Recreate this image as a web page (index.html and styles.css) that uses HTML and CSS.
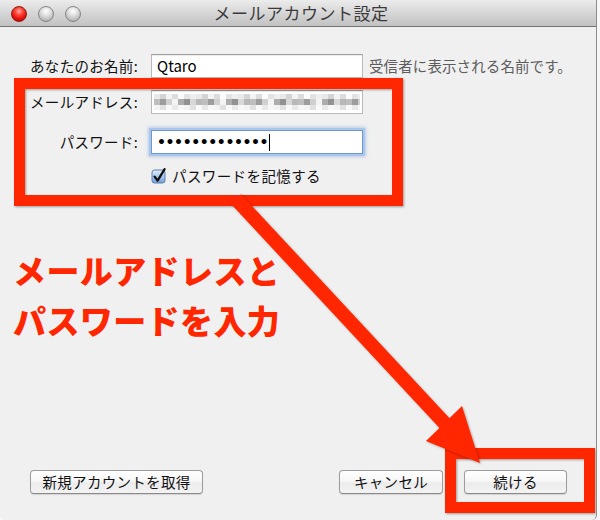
FILE: index.html
```html
<!DOCTYPE html>
<html lang="ja">
<head>
<meta charset="utf-8">
<title>メールアカウント設定</title>
<link rel="stylesheet" href="styles.css">
</head>
<body>
<div class="window">
  <header class="titlebar">
    <div class="lights">
      <span class="light light-red"></span>
      <span class="light light-gray"></span>
      <span class="light light-gray"></span>
    </div>
    <h1 class="title">メールアカウント設定</h1>
    <div class="spacer"></div>
  </header>
  <main class="content">
    <div class="form">
      <div class="row row-name">
        <span class="label">あなたのお名前:</span>
        <div class="field"><span class="value">Qtaro</span></div>
        <span class="hint">受信者に表示される名前です。</span>
      </div>
      <div class="row row-mail">
        <span class="label">メールアドレス:</span>
        <div class="field"><div class="blur"></div></div>
      </div>
      <div class="row row-pass">
        <span class="label">パスワード:</span>
        <div class="field field-focus"><span class="dots">•••••••••••••</span><span class="caret"></span></div>
      </div>
      <div class="row row-check">
        <span class="label"></span>
        <span class="checkbox">
          <svg width="16" height="16" viewBox="0 0 16 16">
            <defs>
              <linearGradient id="cb" x1="0" y1="0" x2="0" y2="1">
                <stop offset="0" stop-color="#e4eefb"/>
                <stop offset="0.5" stop-color="#a9c8ef"/>
                <stop offset="1" stop-color="#6f9fdc"/>
              </linearGradient>
            </defs>
            <rect x="1" y="2" width="13" height="13" rx="2.5" fill="url(#cb)" stroke="#5b7fae" stroke-width="1"/>
            <path d="M3.6 8.6 L6.6 12.6 L13.6 1.2" fill="none" stroke="#111" stroke-width="2.3" stroke-linecap="round" stroke-linejoin="round"/>
          </svg>
        </span>
        <span class="check-label">パスワードを記憶する</span>
      </div>
    </div>
    <p class="callout">メールアドレスと<br>パスワードを入力</p>
    <div class="buttons">
      <button class="btn btn-new">新規アカウントを取得</button>
      <div class="btn-group">
        <button class="btn btn-cancel">キャンセル</button>
        <button class="btn btn-continue">続ける</button>
      </div>
    </div>
  </main>
  <div class="mark mark-fields"></div>
  <div class="mark mark-continue"></div>
  <svg class="arrow" width="598" height="520" viewBox="0 0 598 520">
    <line x1="236" y1="199" x2="450" y2="429" stroke="#ff2600" stroke-width="14"/>
    <polygon points="462,406 426,441 480,463" fill="#ff2600"/>
  </svg>
</div>
</body>
</html>
```

FILE: styles.css
```css
html, body {
  margin: 0;
  padding: 0;
}
body {
  background: #f7f7f7;
  width: 600px;
  height: 520px;
  overflow: hidden;
  font-family: "Noto Sans CJK JP", "Noto Sans", sans-serif;
  color: #1a1a1a;
}
.window {
  position: relative;
  width: 597px;
  height: 520px;
  box-sizing: border-box;
  border-right: 1px solid #8c8c8c;
  border-bottom-left-radius: 5px;
  border-bottom-right-radius: 5px;
  background: #f0f0f0;
  display: flex;
  flex-direction: column;
  overflow: hidden;
}
.titlebar {
  height: 27px;
  box-sizing: border-box;
  border-bottom: 1px solid #737373;
  background: linear-gradient(#ececec, #d6d6d6 50%, #c2c2c2);
  display: grid;
  grid-template-columns: 1fr auto 1fr;
  align-items: center;
}
.lights {
  display: flex;
  gap: 11px;
  padding-left: 11px;
  padding-top: 1px;
}
.light {
  width: 16px;
  height: 16px;
  box-sizing: border-box;
  border-radius: 50%;
}
.light-red {
  background: radial-gradient(circle at 50% 30%, #ffb0a8 0, #ff4a3c 30%, #e0100a 65%, #b00000 100%);
  border: 1px solid #8e1a12;
}
.light-gray {
  background: radial-gradient(circle at 50% 30%, #ffffff 0, #e2e2e2 35%, #b9b9b9 75%, #a3a3a3 100%);
  border: 1px solid #858585;
}
.title {
  margin: 0;
  font-size: 17px;
  font-weight: 400;
  color: #3a3a3a;
  line-height: 26px;
  letter-spacing: 0.5px;
  padding-left: 6px;
}
.content {
  flex: 1;
  display: flex;
  flex-direction: column;
  padding-top: 27px;
  padding-bottom: 26px;
}
.form {
  display: flex;
  flex-direction: column;
}
.row {
  display: flex;
  align-items: center;
  height: 24px;
}
.row-mail { margin-top: 12px; }
.row-pass { margin-top: 16px; }
.row-check { margin-top: 12px; height: 20px; }
.label {
  width: 138px;
  margin-right: 13px;
  text-align: right;
  font-size: 14.5px;
  line-height: 20px;
  letter-spacing: 0.3px;
  flex: none;
  color: #111;
}
.field {
  width: 212px;
  height: 24px;
  box-sizing: border-box;
  background: #fff;
  border: 1px solid #b9b9b9;
  border-top-color: #9e9e9e;
  box-shadow: inset 0 1px 1px rgba(0, 0, 0, 0.08);
  display: flex;
  align-items: center;
  padding-left: 5px;
  flex: none;
}
.value {
  font-size: 15px;
  line-height: 20px;
  color: #000;
}
.hint {
  margin-left: 6px;
  font-size: 14.5px;
  line-height: 20px;
  color: #5d5d5d;
  letter-spacing: 0.1px;
}
.blur {
  width: 206px;
  height: 16px;
  margin-left: -3px;
  background:
    repeating-linear-gradient(90deg, rgba(0,0,0,.10) 0 6px, rgba(0,0,0,.20) 6px 12px, rgba(0,0,0,.06) 12px 18px, rgba(0,0,0,.16) 18px 24px, rgba(0,0,0,.02) 24px 30px, rgba(0,0,0,.13) 30px 36px, rgba(0,0,0,.08) 36px 42px) 0 0 / 100% 5px no-repeat,
    repeating-linear-gradient(90deg, rgba(0,0,0,.30) 0 6px, rgba(0,0,0,.45) 6px 12px, rgba(0,0,0,.22) 12px 18px, rgba(0,0,0,.05) 18px 24px, rgba(0,0,0,.38) 24px 30px, rgba(0,0,0,.50) 30px 36px, rgba(0,0,0,.18) 36px 42px, rgba(0,0,0,.33) 42px 48px) 0 5px / 100% 6px no-repeat,
    repeating-linear-gradient(90deg, rgba(0,0,0,.06) 0 6px, rgba(0,0,0,.14) 6px 12px, rgba(0,0,0,.03) 12px 18px, rgba(0,0,0,.10) 18px 24px, rgba(0,0,0,.04) 24px 30px) 0 11px / 100% 5px no-repeat;
  opacity: 0.85;
}
.field-focus {
  border: 1px solid #6f98d2;
  box-shadow: 0 0 0 2px #a9c6ec, 0 0 3px 3px rgba(120, 160, 220, 0.45);
  padding-left: 5px;
}
.dots {
  font-family: "DejaVu Sans", sans-serif;
  font-size: 14px;
  font-weight: 700;
  line-height: 18px;
  color: #000;
  letter-spacing: -0.4px;
}
.caret {
  display: inline-block;
  width: 1px;
  height: 17px;
  background: #000;
  margin-left: 1px;
}
.checkbox {
  width: 16px;
  height: 16px;
  display: flex;
  margin-left: 0px;
  margin-right: 5px;
}
.check-label {
  font-size: 14.5px;
  line-height: 20px;
  letter-spacing: 0.4px;
  color: #111;
}
.callout {
  margin: 59px 0 0 0;
  padding-left: 13px;
  font-size: 33px;
  line-height: 50px;
  font-weight: 900;
  color: #ff2600;
  letter-spacing: 0.4px;
}
.buttons {
  margin-top: auto;
  display: flex;
  justify-content: space-between;
  padding-left: 30px;
  padding-right: 29px;
}
.btn-group {
  display: flex;
  gap: 21px;
}
.btn {
  height: 24px;
  box-sizing: border-box;
  margin: 0;
  padding: 0;
  font-family: "Noto Sans CJK JP", "Noto Sans", sans-serif;
  font-size: 14.5px;
  line-height: 20px;
  color: #111;
  background: linear-gradient(#ffffff, #f7f7f7 45%, #ececec 55%, #f3f3f3);
  border: 1px solid #9d9d9d;
  border-bottom-color: #8a8a8a;
  border-radius: 4px;
  box-shadow: 0 1px 1px rgba(0, 0, 0, 0.12);
  letter-spacing: 0.3px;
}
.btn-new { width: 173px; }
.btn-cancel { width: 104px; }
.btn-continue { width: 103px; }
.mark {
  position: absolute;
  box-sizing: border-box;
  border: 11px solid #ff2600;
  filter: drop-shadow(1px 1px 1px rgba(0, 0, 0, 0.35));
}
.mark-fields {
  left: 14px;
  top: 78px;
  width: 389px;
  height: 128px;
}
.mark-continue {
  left: 445px;
  top: 448px;
  width: 150px;
  height: 65px;
}
.arrow {
  position: absolute;
  left: 0;
  top: 0;
  pointer-events: none;
  filter: drop-shadow(1px 1px 1px rgba(0, 0, 0, 0.3));
}
```
